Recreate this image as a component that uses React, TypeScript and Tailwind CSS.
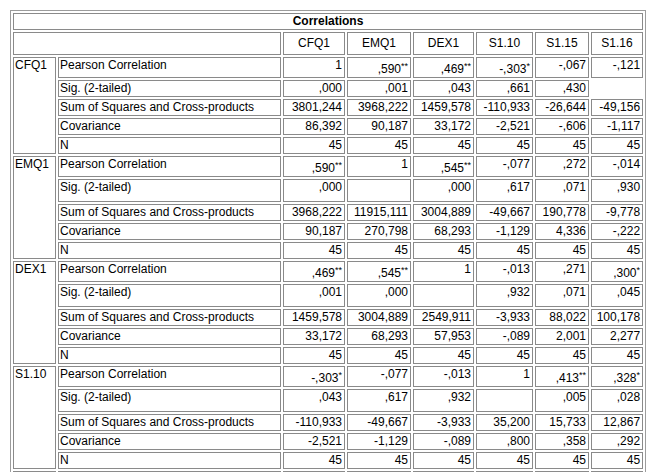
import React from "react";

type Val = { v: string; s?: string } | null | undefined;

type Row = { label: string; h: "p" | "s" | "sb" | "r"; vals: Val[] };
type Block = { name: string; rows: Row[] };

const v = (x: string, s?: string): Val => ({ v: x, s });
const n45: Val[] = [v("45"), v("45"), v("45"), v("45"), v("45"), v("45")];

const blocks: Block[] = [
  {
    name: "CFQ1",
    rows: [
      { label: "Pearson Correlation", h: "p", vals: [v("1"), v(",590", "**"), v(",469", "**"), v("-,303", "*"), v("-,067"), v("-,121")] },
      { label: "Sig. (2-tailed)", h: "s", vals: [v(",000"), v(",001"), v(",043"), v(",661"), v(",430"), undefined] },
      { label: "Sum of Squares and Cross-products", h: "r", vals: [v("3801,244"), v("3968,222"), v("1459,578"), v("-110,933"), v("-26,644"), v("-49,156")] },
      { label: "Covariance", h: "r", vals: [v("86,392"), v("90,187"), v("33,172"), v("-2,521"), v("-,606"), v("-1,117")] },
      { label: "N", h: "r", vals: n45 },
    ],
  },
  {
    name: "EMQ1",
    rows: [
      { label: "Pearson Correlation", h: "p", vals: [v(",590", "**"), v("1"), v(",545", "**"), v("-,077"), v(",272"), v("-,014")] },
      { label: "Sig. (2-tailed)", h: "sb", vals: [v(",000"), null, v(",000"), v(",617"), v(",071"), v(",930")] },
      { label: "Sum of Squares and Cross-products", h: "r", vals: [v("3968,222"), v("11915,111"), v("3004,889"), v("-49,667"), v("190,778"), v("-9,778")] },
      { label: "Covariance", h: "r", vals: [v("90,187"), v("270,798"), v("68,293"), v("-1,129"), v("4,336"), v("-,222")] },
      { label: "N", h: "r", vals: n45 },
    ],
  },
  {
    name: "DEX1",
    rows: [
      { label: "Pearson Correlation", h: "p", vals: [v(",469", "**"), v(",545", "**"), v("1"), v("-,013"), v(",271"), v(",300", "*")] },
      { label: "Sig. (2-tailed)", h: "sb", vals: [v(",001"), v(",000"), null, v(",932"), v(",071"), v(",045")] },
      { label: "Sum of Squares and Cross-products", h: "r", vals: [v("1459,578"), v("3004,889"), v("2549,911"), v("-3,933"), v("88,022"), v("100,178")] },
      { label: "Covariance", h: "r", vals: [v("33,172"), v("68,293"), v("57,953"), v("-,089"), v("2,001"), v("2,277")] },
      { label: "N", h: "r", vals: n45 },
    ],
  },
  {
    name: "S1.10",
    rows: [
      { label: "Pearson Correlation", h: "p", vals: [v("-,303", "*"), v("-,077"), v("-,013"), v("1"), v(",413", "**"), v(",328", "*")] },
      { label: "Sig. (2-tailed)", h: "sb", vals: [v(",043"), v(",617"), v(",932"), null, v(",005"), v(",028")] },
      { label: "Sum of Squares and Cross-products", h: "r", vals: [v("-110,933"), v("-49,667"), v("-3,933"), v("35,200"), v("15,733"), v("12,867")] },
      { label: "Covariance", h: "r", vals: [v("-2,521"), v("-1,129"), v("-,089"), v(",800"), v(",358"), v(",292")] },
      { label: "N", h: "r", vals: n45 },
    ],
  },
  {
    name: "S1.15",
    rows: [
      { label: "Pearson Correlation", h: "p", vals: [v("-,067"), v(",272"), v(",271"), v(",413", "**"), v("1"), v(",212")] },
      { label: "Sig. (2-tailed)", h: "sb", vals: [v(",661"), v(",071"), v(",071"), v(",005"), null, v(",162")] },
      { label: "Sum of Squares and Cross-products", h: "r", vals: [v("-26,644"), v("190,778"), v("88,022"), v("15,733"), v("39,644"), v("8,156")] },
      { label: "Covariance", h: "r", vals: [v("-,606"), v("4,336"), v("2,001"), v(",358"), v(",901"), v(",185")] },
      { label: "N", h: "r", vals: n45 },
    ],
  },
];

const hClass: Record<Row["h"], string> = {
  p: "h-[21px]",
  s: "h-[17px]",
  sb: "h-[23px]",
  r: "h-[17px]",
};

const cellBorder = "border border-[#8a8a8a]";

function ValCell({ val, h }: { val: Val; h: string }) {
  if (val === undefined) return <td className={`p-0 border-0 ${h}`} />;
  if (val === null) return <td className={`p-0 ${cellBorder} ${h}`} />;
  return (
    <td className={`p-0 pr-[2px] text-right align-top whitespace-nowrap ${cellBorder} ${h}`}>
      <div className={val.s ? "pt-[4px]" : ""}>
        {val.v}
        {val.s && <sup className="text-[9px]">{val.s}</sup>}
      </div>
    </td>
  );
}

export default function App() {
  const heads = ["CFQ1", "EMQ1", "DEX1", "S1.10", "S1.15", "S1.16"];
  return (
    <div className="bg-white min-h-screen p-[10px] text-black" style={{ fontFamily: '"Liberation Sans", Arial, sans-serif' }}>
      <table className="table-fixed border-separate border-spacing-[2px] border border-[#9c9c9c] w-[636px] text-[12px] leading-[15px]">
        <colgroup>
          <col className="w-[43px]" />
          <col className="w-[223px]" />
          <col className="w-[62px]" />
          <col className="w-[64px]" />
          <col className="w-[61px]" />
          <col className="w-[57px]" />
          <col className="w-[54px]" />
          <col className="w-[52px]" />
        </colgroup>
        <tbody>
          <tr>
            <td colSpan={8} className={`p-0 h-[17px] text-center font-bold align-middle ${cellBorder}`}>
              Correlations
            </td>
          </tr>
          <tr>
            <td colSpan={2} className={`p-0 h-[23px] ${cellBorder}`} />
            {heads.map((hd) => (
              <td key={hd} className={`p-0 h-[23px] text-center align-middle ${cellBorder}`}>
                {hd}
              </td>
            ))}
          </tr>
          {blocks.map((b) =>
            b.rows.map((r, i) => (
              <tr key={b.name + i}>
                {i === 0 && (
                  <td rowSpan={5} className={`p-0 pl-[1px] align-top ${cellBorder}`}>
                    {b.name}
                  </td>
                )}
                <td className={`p-0 pl-[1px] align-top whitespace-nowrap ${cellBorder} ${hClass[r.h]}`}>{r.label}</td>
                {r.vals.map((val, j) => (
                  <ValCell key={j} val={val} h={hClass[r.h]} />
                ))}
              </tr>
            ))
          )}
        </tbody>
      </table>
    </div>
  );
}
